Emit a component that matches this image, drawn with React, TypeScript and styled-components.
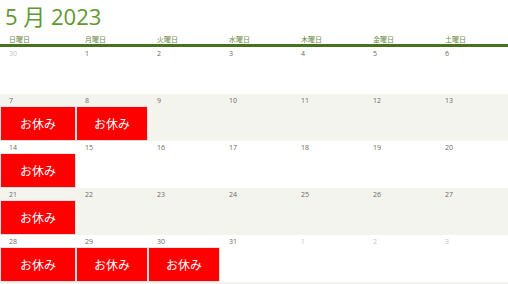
import styled, { createGlobalStyle } from 'styled-components';

interface Day {
    date?: number;
    outside?: boolean;
    holiday?: boolean;
}

const GlobalStyle = createGlobalStyle`
    html, body {
        margin: 0;
        padding: 0;
        background: #ffffff;
        overflow: hidden;
    }
    body {
        font-family: "Open Sans", "Noto Sans CJK JP", sans-serif;
    }
`;

const Page = styled.div`
    width: 508px;
    height: 284px;
    overflow: hidden;
`;

const Title = styled.h1`
    margin: 0;
    padding: 1px 0 0 5px;
    height: 31px;
    font-size: 22px;
    font-weight: 400;
    line-height: 30px;
    color: #5f9732;
`;

const WeekHeader = styled.div`
    display: grid;
    grid-template-columns: 76px repeat(6, 72px);
    height: 12px;
    border-bottom: 3px solid #467222;
`;

const DayName = styled.div`
    padding: 3px 0 0 9px;
    font-size: 7px;
    line-height: 9px;
    color: #6b8a45;
`;

const WeekRow = styled.div<{ $shaded: boolean }>`
    display: grid;
    grid-template-columns: 76px repeat(6, 72px);
    height: 47px;
    background: ${props => props.$shaded ? '#f4f4ef' : '#ffffff'};
`;

const Cell = styled.div`
    display: flex;
    flex-direction: column;
    min-width: 0;
`;

const DateNum = styled.div<{ $outside: boolean }>`
    height: 12px;
    padding: 1px 0 0 9px;
    box-sizing: border-box;
    font-size: 7px;
    line-height: 11px;
    color: ${props => props.$outside ? '#c4c4cc' : '#6a6a6a'};
`;

const Holiday = styled.div`
    flex: 1;
    display: flex;
    align-items: center;
    justify-content: center;
    background: #ff0000;
    border: 1px solid #dddddd;
    border-top-color: #e4e4e4;
    color: #ffffff;
    font-size: 12px;
`;

const dayNames = ['日曜日', '月曜日', '火曜日', '水曜日', '木曜日', '金曜日', '土曜日'];

const weeks: Day[][] = [
    [{ date: 30, outside: true }, { date: 1 }, { date: 2 }, { date: 3 }, { date: 4 }, { date: 5 }, { date: 6 }],
    [{ date: 7, holiday: true }, { date: 8, holiday: true }, { date: 9 }, { date: 10 }, { date: 11 }, { date: 12 }, { date: 13 }],
    [{ date: 14, holiday: true }, { date: 15 }, { date: 16 }, { date: 17 }, { date: 18 }, { date: 19 }, { date: 20 }],
    [{ date: 21, holiday: true }, { date: 22 }, { date: 23 }, { date: 24 }, { date: 25 }, { date: 26 }, { date: 27 }],
    [{ date: 28, holiday: true }, { date: 29, holiday: true }, { date: 30, holiday: true }, { date: 31 }, { date: 1, outside: true }, { date: 2, outside: true }, { date: 3, outside: true }],
    [{}, {}, {}, {}, {}, {}, {}],
];

const App = () => {
    return (
        <Page>
            <GlobalStyle />
            <Title>5 月 2023</Title>
            <WeekHeader>
                {dayNames.map(name => <DayName key={name}>{name}</DayName>)}
            </WeekHeader>
            {weeks.map((week, i) => (
                <WeekRow key={i} $shaded={i % 2 === 1}>
                    {week.map((day, j) => (
                        <Cell key={j}>
                            <DateNum $outside={!!day.outside}>{day.date}</DateNum>
                            {day.holiday && <Holiday>お休み</Holiday>}
                        </Cell>
                    ))}
                </WeekRow>
            ))}
        </Page>
    );
};

export default App;
